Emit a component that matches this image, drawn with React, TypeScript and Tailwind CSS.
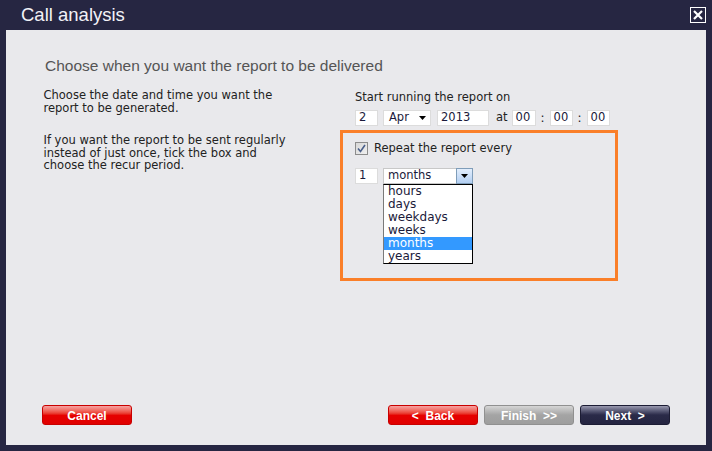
import React from "react";

const V = "font-['DejaVu_Sans',Verdana,sans-serif]";
const A = "font-['Liberation_Sans',Arial,sans-serif]";

function Arrow() {
  return (
    <svg width="7" height="4" viewBox="0 0 7 4">
      <path d="M0 0 H7 L3.5 4 Z" fill="#000" />
    </svg>
  );
}

function Box({ w, children }: { w: string; children?: React.ReactNode }) {
  return (
    <div
      className={`${w} h-[16px] bg-white border border-[#dcdcdc] flex items-center pl-[3px] text-[11.5px] leading-none text-[#1a1a3a] ${V}`}
    >
      {children}
    </div>
  );
}

function Btn({ label, kind }: { label: string; kind: "red" | "gray" | "navy" }) {
  const cls =
    kind === "red"
      ? "bg-linear-to-b from-[#f6a2a2] via-[#e60000] via-50% to-[#e00000] border-[#c80000]"
      : kind === "gray"
      ? "bg-linear-to-b from-[#d6d6d6] via-[#a4a4a4] via-50% to-[#9e9e9e] border-[#909090]"
      : "bg-linear-to-b from-[#9a9ab0] via-[#2a2a48] via-50% to-[#252541] border-[#1c1c34]";
  return (
    <div
      className={`w-[90px] h-[20px] rounded-[3px] border flex items-center justify-center pt-[1px] text-white font-bold text-[12px] leading-none whitespace-pre ${A} ${cls}`}
    >
      {label}
    </div>
  );
}

export default function App() {
  return (
    <div className="w-[712px] h-[451px] bg-[#262642] flex flex-col overflow-hidden">
      <div className="h-[30px] shrink-0 flex items-center justify-between pl-[21px] pr-[6px]">
        <span className={`text-[#f2f2f7] text-[18.5px] leading-none ${A}`}>Call analysis</span>
        <div className="w-[16px] h-[16px] border-[1.5px] border-white flex items-center justify-center mb-[1px]">
          <svg width="10" height="10" viewBox="0 0 10 10">
            <path d="M1 1 L9 9 M9 1 L1 9" stroke="#fff" strokeWidth="2.2" />
          </svg>
        </div>
      </div>
      <div className="mx-[6px] mb-[6px] flex-1 bg-[#e9e9ec] flex flex-col pt-[27px] px-[36px] pb-[20px]">
        <h1 className={`pl-[3px] text-[15.5px] leading-[18px] text-[#555555] ${A}`}>
          Choose when you want the report to be delivered
        </h1>
        <div className="flex mt-[13px]">
          <div className={`w-[298px] pl-[1.5px] pt-[1px] text-[11.5px] leading-[12.5px] text-[#222222] ${V}`}>
            <p className="w-[250px]">Choose the date and time you want the report to be generated.</p>
            <p className="w-[250px] mt-[20px]">
              If you want the report to be sent regularly instead of just once, tick the box and choose the recur
              period.
            </p>
          </div>
          <div className="flex flex-col pt-[3px]">
            <div className="pl-[15px]">
              <div className={`text-[11.5px] leading-[13px] text-[#222222] ${V}`}>Start running the report on</div>
              <div className="flex items-center mt-[6px]">
                <Box w="w-[23px]">2</Box>
                <div
                  className={`ml-[5px] w-[48px] h-[16px] bg-white border border-[#dcdcdc] flex items-center justify-between pl-[5px] pr-[4px] text-[11.5px] leading-none text-[#1a1a3a] ${V}`}
                >
                  <span>Apr</span>
                  <Arrow />
                </div>
                <div className="ml-[6px]">
                  <Box w="w-[52px]">2013</Box>
                </div>
                <span className={`ml-[7px] text-[11.5px] leading-none text-[#222222] ${V}`}>at</span>
                <div className="ml-[4px]">
                  <Box w="w-[24px]">00</Box>
                </div>
                <span className={`w-[14px] text-center text-[12px] leading-none text-[#222222] ${V}`}>:</span>
                <Box w="w-[23px]">00</Box>
                <span className={`w-[14px] text-center text-[12px] leading-none text-[#222222] ${V}`}>:</span>
                <Box w="w-[23px]">00</Box>
              </div>
            </div>
            <div className="mt-[4px] w-[278px] h-[151px] border-[3px] border-[#fa7f29] pl-[12px] pt-[9px]">
              <div className="flex items-center h-[13px]">
                <div className="w-[13px] h-[13px] border border-[#8c8c8c] bg-linear-to-br from-[#d8d8d8] to-[#f0f0f0] flex items-center justify-center">
                  <svg width="9" height="9" viewBox="0 0 9 9">
                    <path d="M1 4.5 L3.5 7.5 L8 1" stroke="#4a5f8a" strokeWidth="1.6" fill="none" />
                  </svg>
                </div>
                <span className={`ml-[6px] text-[11.5px] leading-none text-[#222222] ${V}`}>Repeat the report every</span>
              </div>
              <div className="flex mt-[13px]">
                <Box w="w-[23px]">1</Box>
                <div className="relative ml-[5px]">
                  <div
                    className={`w-[90px] h-[16px] bg-white border border-[#c8c8c8] flex items-center pl-[4px] text-[11.5px] leading-none text-[#1a1a3a] ${V}`}
                  >
                    <span className="flex-1">months</span>
                    <div className="w-[17px] h-[16px] -mr-[1px] border border-[#7f9db9] bg-linear-to-b from-[#e3eefc] to-[#b3cff2] flex items-center justify-center">
                      <Arrow />
                    </div>
                  </div>
                  <div
                    className={`absolute left-0 top-full w-[90px] bg-white border border-black border-l-[#7a7a7a] text-[12px] leading-[13px] text-[#1a1a3a] ${V}`}
                  >
                    {["hours", "days", "weekdays", "weeks", "months", "years"].map((t) => (
                      <div
                        key={t}
                        className={`h-[13px] pl-[4px] ${t === "months" ? "bg-[#3399ff] text-white" : ""}`}
                      >
                        {t}
                      </div>
                    ))}
                  </div>
                </div>
              </div>
            </div>
          </div>
        </div>
        <div className="mt-auto flex items-center">
          <Btn label="Cancel" kind="red" />
          <div className="ml-auto flex gap-[6px]">
            <Btn label="<  Back" kind="red" />
            <Btn label="Finish  >>" kind="gray" />
            <Btn label="Next  >" kind="navy" />
          </div>
        </div>
      </div>
    </div>
  );
}
